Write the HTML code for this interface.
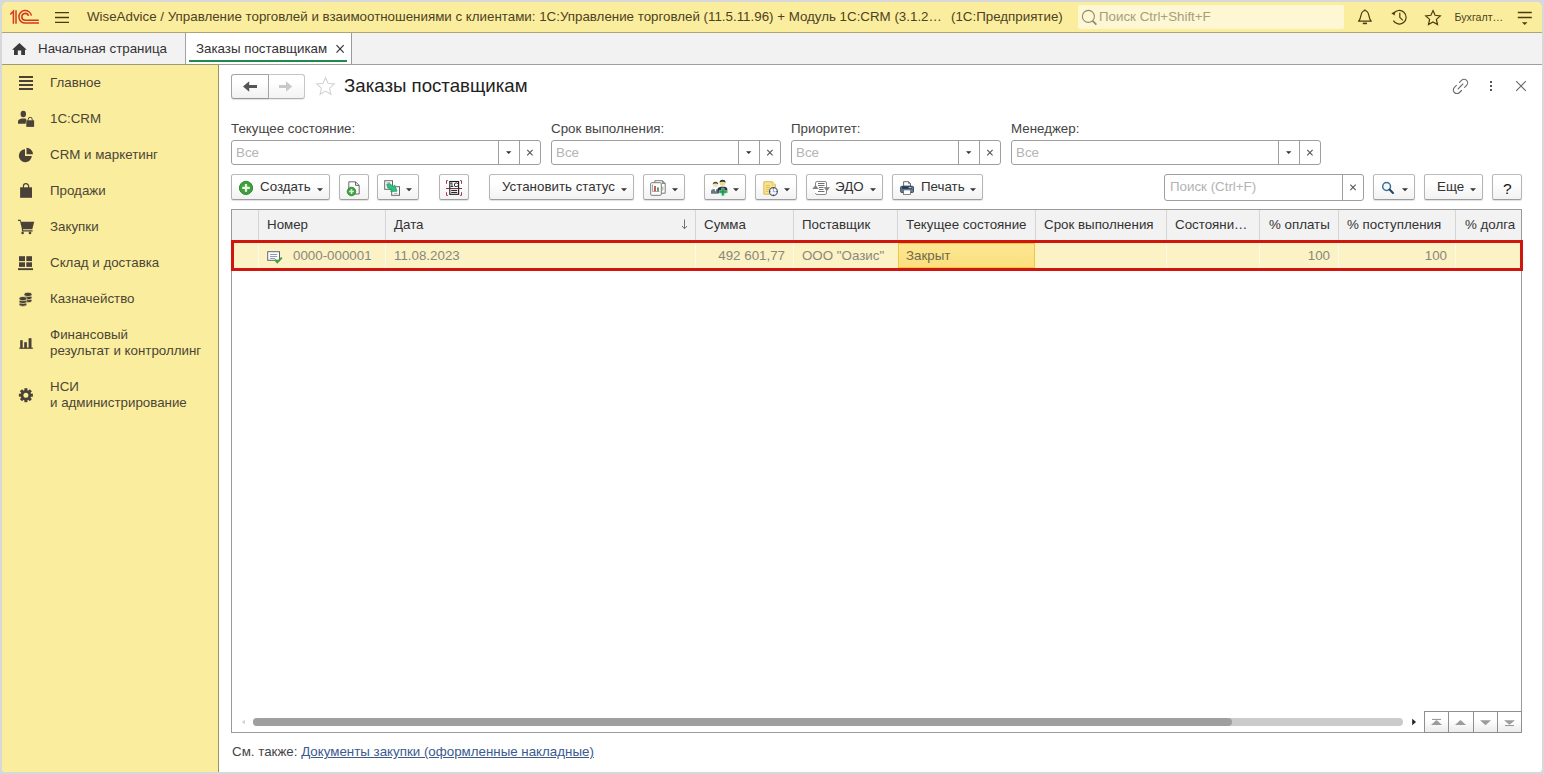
<!DOCTYPE html>
<html lang="ru">
<head>
<meta charset="utf-8">
<title>Заказы поставщикам</title>
<style>
*{box-sizing:border-box;margin:0;padding:0}
html,body{width:1544px;height:774px;overflow:hidden}
body{background:#d6d8d9;font-family:"Liberation Sans",Arial,sans-serif;font-size:13.33px;color:#333;position:relative}
.abs{position:absolute}
#win{position:absolute;left:2px;top:2px;width:1540px;height:770px;background:#fff;border-radius:6px 6px 4px 4px;overflow:hidden}
#top{position:absolute;left:0;top:0;width:1540px;height:31px;background:#fbed9e;border-bottom:1px solid #aea277}
#tabs{position:absolute;left:0;top:31px;width:1540px;height:32px;background:#f2f2f2;border-bottom:1px solid #a09fa0}
#side{position:absolute;left:0;top:62px;width:217px;height:708px;background:#fbed9e;border-right:1px solid #9b9167;border-top:1px solid #9c9b77}
#main{position:absolute;left:217px;top:63px;width:1323px;height:707px;background:#fff}
.t{position:absolute;white-space:nowrap;line-height:16px}
#title{left:85px;top:7px;font-size:13.33px;color:#4b4321;line-height:16px}
.tab{position:absolute;top:0;height:31px;font-size:13.33px;color:#333;line-height:16px}
.nav{position:absolute;left:48px;color:#4a4636;font-size:13.33px;line-height:16px;margin-top:.5px;white-space:nowrap}
.ico{position:absolute}
.lbl{position:absolute;top:56px;font-size:13.33px;color:#444;line-height:16px;white-space:nowrap}
.inp{position:absolute;top:75px;height:25px;border:1px solid #9f9f9f;border-radius:3px;background:#fff}
.inp .ph{position:absolute;left:4px;top:4px;color:#b3b3b3;font-size:13.33px;line-height:16px}
.inp .sep{position:absolute;top:0;width:1px;height:23px;background:#9f9f9f}
.btn{position:absolute;top:109px;height:26px;border:1px solid #b4b4b4;border-top-color:#bcbcbc;border-bottom-color:#9c9c9c;border-radius:2.500px;background:linear-gradient(#ffffff 30%,#f2f2f2);box-shadow:0 1px 1px rgba(0,0,0,.13);font-size:13.33px;color:#333;line-height:16px;white-space:nowrap}
.btn .tx{position:absolute;top:4px}
.dd{position:absolute;width:0;height:0;border-left:3px solid transparent;border-right:3px solid transparent;border-top:3px solid #333}
.x{position:absolute;color:#555;font-size:13.33px;line-height:16px}
#grid{position:absolute;left:12px;top:144px;width:1291px;height:524px;border:1px solid #9a9a9a;background:#fff}
#ghead{position:absolute;left:0;top:0;width:1289px;height:30px;background:#f2f2f2}
.hc{position:absolute;top:7px;font-size:13.33px;color:#333;line-height:16px;white-space:nowrap}
.hs{position:absolute;top:0;width:1px;height:30px;background:#d5d5d5}
#row{position:absolute;left:-1px;top:30px;width:1292px;height:31px;background:#fbf2c6;border:3px solid #cf150e}
.rs{position:absolute;top:0;width:1px;height:25px;background:rgba(255,255,255,.5)}
.rc{position:absolute;top:5px;font-size:13.33px;color:#8a8878;line-height:16px;white-space:nowrap}
</style>
</head>
<body>
<div id="win">
<div id="top">
  <div class="t" id="title">WiseAdvice / Управление торговлей и взаимоотношениями с клиентами: 1С:Управление торговлей (11.5.11.96) + Модуль 1С:CRM (3.1.2…</div>
  <div class="t" id="title2" style="left:949px;top:7px;font-size:13.33px;color:#4b4321">(1С:Предприятие)</div>
  <div class="abs" id="gsearch" style="left:1076px;top:3px;width:266px;height:24px;background:#fdf7d4;border-radius:2px"></div>
  <div class="t" style="left:1097px;top:7px;font-size:13.33px;color:#a59f7b">Поиск Ctrl+Shift+F</div>
  <div class="t" id="usr" style="left:1452.500px;top:7px;font-size:10.67px;color:#4b4321">Бухгалт…</div>
</div>
<div id="tabs">
  <div class="tab" style="left:0;width:184px;border-right:1px solid #a2a2a2"><span class="t" style="left:36px;top:8px">Начальная страница</span></div>
  <div class="tab" style="left:184px;width:166px;background:#fff;border-right:1px solid #9a9a9a"><span class="t" style="left:10px;top:8px">Заказы поставщикам</span>
    <div class="abs" style="left:3px;top:27px;width:158px;height:2px;background:#1f8a4c"></div></div>
</div>
<div id="side">
  <div class="nav" style="top:9px">Главное</div>
  <div class="nav" style="top:45px">1C:CRM</div>
  <div class="nav" style="top:81px">CRM и маркетинг</div>
  <div class="nav" style="top:117px">Продажи</div>
  <div class="nav" style="top:153px">Закупки</div>
  <div class="nav" style="top:189px">Склад и доставка</div>
  <div class="nav" style="top:225px">Казначейство</div>
  <div class="nav" style="top:261px">Финансовый<br>результат и контроллинг</div>
  <div class="nav" style="top:313px">НСИ<br>и администрирование</div>
</div>
<div id="main">
  <div class="abs" id="navbtn" style="left:12px;top:9px;width:38px;height:25px;border:1px solid #a4a4a4;border-bottom-color:#959595;border-radius:3px 0 0 3px;background:linear-gradient(#fff 30%,#f1f1f1);box-shadow:0 1px 1px rgba(0,0,0,.12)"></div><div class="abs" style="left:49px;top:9px;width:37px;height:25px;border:1px solid #c6c6c6;border-left-color:#a4a4a4;border-bottom-color:#b0b0b0;border-radius:0 3px 3px 0;background:linear-gradient(#fff 30%,#f3f3f3);box-shadow:0 1px 1px rgba(0,0,0,.08)"></div>
  <div class="t" id="h1" style="left:125px;top:10px;font-size:18.67px;line-height:22px;color:#222">Заказы поставщикам</div>

  <div class="lbl" style="left:12px">Текущее состояние:</div>
  <div class="lbl" style="left:332px">Срок выполнения:</div>
  <div class="lbl" style="left:572px">Приоритет:</div>
  <div class="lbl" style="left:792px">Менеджер:</div>

  <div class="inp" style="left:12px;width:310px"><span class="ph">Все</span><div class="sep" style="left:266px"></div><div class="sep" style="left:287px"></div></div>
  <div class="inp" style="left:332px;width:230px"><span class="ph">Все</span><div class="sep" style="left:186px"></div><div class="sep" style="left:207px"></div></div>
  <div class="inp" style="left:572px;width:210px"><span class="ph">Все</span><div class="sep" style="left:166px"></div><div class="sep" style="left:187px"></div></div>
  <div class="inp" style="left:792px;width:310px"><span class="ph">Все</span><div class="sep" style="left:266px"></div><div class="sep" style="left:287px"></div></div>

  <div class="btn" style="left:12px;width:99px"><span class="tx" style="left:28px">Создать</span></div>
  <div class="btn" style="left:120px;width:30px"></div>
  <div class="btn" style="left:158px;width:42px"></div>
  <div class="btn" style="left:220px;width:30px"></div>
  <div class="btn" style="left:270px;width:145px"><span class="tx" style="left:12px">Установить статус</span></div>
  <div class="btn" style="left:424px;width:42px"></div>
  <div class="btn" style="left:485px;width:42px"></div>
  <div class="btn" style="left:536px;width:42px"></div>
  <div class="btn" style="left:587px;width:77px"><span class="tx" style="left:28px">ЭДО</span></div>
  <div class="btn" style="left:673px;width:91px"><span class="tx" style="left:28px">Печать</span></div>
  <div class="inp" id="srch" style="left:945px;top:109px;width:200px;height:27px"><span class="ph" style="top:4px;left:5px">Поиск (Ctrl+F)</span><div class="sep" style="left:177px;height:25px"></div></div>
  <div class="btn" style="left:1154px;width:42px"></div>
  <div class="btn" style="left:1205px;width:59px"><span class="tx" style="left:12px">Еще</span></div>
  <div class="btn" style="left:1273px;width:30px"><span class="tx" id="q" style="left:10px;top:5.500px;font-size:15.500px;color:#111">?</span></div>

  <div id="grid">
    <div id="ghead">
      <div class="hs" style="left:26px"></div><div class="hc" style="left:35px">Номер</div>
      <div class="hs" style="left:153px"></div><div class="hc" style="left:162px">Дата</div>
      <div class="hs" style="left:463px"></div><div class="hc" style="left:472px">Сумма</div>
      <div class="hs" style="left:561px"></div><div class="hc" style="left:570px">Поставщик</div>
      <div class="hs" style="left:665px"></div><div class="hc" style="left:674px">Текущее состояние</div>
      <div class="hs" style="left:803px"></div><div class="hc" style="left:812px">Срок выполнения</div>
      <div class="hs" style="left:934px"></div><div class="hc" style="left:943px">Состояни…</div>
      <div class="hs" style="left:1027px"></div><div class="hc" style="left:1037px">% оплаты</div>
      <div class="hs" style="left:1106px"></div><div class="hc" style="left:1115px">% поступления</div>
      <div class="hs" style="left:1223px"></div><div class="hc" style="left:1233px">% долга</div>
    </div>
    <div id="row">
      <div class="rs" style="left:24px"></div><div class="rs" style="left:151px"></div><div class="rs" style="left:461px"></div><div class="rs" style="left:559px"></div><div class="rs" style="left:932px"></div><div class="rs" style="left:1025px"></div><div class="rs" style="left:1104px"></div><div class="rs" style="left:1221px"></div>
      <div class="rc" style="left:59px">0000-000001</div>
      <div class="rc" style="left:160px">11.08.2023</div>
      <div class="rc" style="right:735px">492 601,77</div>
      <div class="rc" style="left:568px">ООО "Оазис"</div>
      <div class="abs" id="cell" style="left:664px;top:0;width:137px;height:25px;background:linear-gradient(#fce791,#fbdf80);border:1px solid #f1c640"></div>
      <div class="rc" style="left:672px;color:#6e6a4e">Закрыт</div>
      <div class="rc" style="right:190px">100</div>
      <div class="rc" style="right:73px">100</div>
    </div>
  </div>
  <div class="abs" id="sbtn" style="left:1205px;top:646px;width:98px;height:22px;border:1px solid #8f8f8f;background:linear-gradient(#fff 40%,#ececec)"><div class="abs" style="left:23px;top:0;width:1px;height:20px;background:#8f8f8f"></div><div class="abs" style="left:48px;top:0;width:1px;height:20px;background:#8f8f8f"></div><div class="abs" style="left:72px;top:0;width:1px;height:20px;background:#8f8f8f"></div></div>
  <div class="t" style="left:13px;top:679px;font-size:13.33px;color:#444">См. также: <span style="color:#3b5a8e;text-decoration:underline">Документы закупки (оформленные накладные)</span></div>
</div>
</div>
<svg id="ico" width="1544" height="774" viewBox="0 0 1544 774" style="position:absolute;left:0;top:0;pointer-events:none;will-change:transform">
<!-- 1C logo -->
<g fill="none" stroke="#d4391d" stroke-width="1.5" stroke-linecap="butt">
  <path d="M10.3 14.4 L13.4 11.2 L13.4 23.8"/>
  <path d="M16 10.2 L16 23.8"/>
  <path d="M31.4 15.7 A6.3 6.3 0 1 0 25.2 23.1 L39 23.1"/>
  <path d="M28.5 15.9 A3.4 3.4 0 1 0 25.2 20.2 L38.8 20.2"/>
</g>
<!-- hamburger top -->
<g stroke="#4a3b0c" stroke-width="1.3">
  <path d="M55 12.6H69M55 17.5H69M55 22.4H69"/>
</g>
<!-- global search magnifier -->
<g fill="none" stroke="#8f8a70" stroke-width="1.1">
  <circle cx="1088.4" cy="16.4" r="6"/>
  <path d="M1092.6 20.8L1096.4 24.6" stroke-width="1.8"/>
</g>
<!-- bell -->
<g fill="none" stroke="#4a3b0c" stroke-width="1.2" stroke-linejoin="round">
  <path d="M1358.5 21.2 C1361.5 19 1360.2 13.5 1362.6 11.6 C1363.6 10.7 1364.2 10.6 1364.9 10.4 C1365.6 10.6 1366.2 10.7 1367.2 11.6 C1369.6 13.500 1368.300 19 1371.300 21.200 Z"/>
  <path d="M1364.9 10.400V9.4"/>
  <path d="M1362.8 23.4 H1367" stroke-width="1.6"/>
</g>
<!-- history -->
<g fill="none" stroke="#4a3b0c" stroke-width="1.2">
  <path d="M1393.6 13.6 A6.800 6.800 0 1 1 1393.400 20.600"/>
  <path d="M1399.800 12.800V17.300L1402.800 20.300"/>
  <path d="M1391.300 13.200 L1394.600 15.600 L1395.200 11.600Z" fill="#4a3b0c" stroke="none"/>
</g>
<!-- star top -->
<path d="M1433 10.600 L1435.100 15.300 L1440.300 15.900 L1436.400 19.400 L1437.500 24.500 L1433 21.900 L1428.500 24.500 L1429.600 19.400 L1425.700 15.900 L1430.900 15.300Z" fill="none" stroke="#4a3b0c" stroke-width="1.2" stroke-linejoin="miter"/>
<!-- menu lines right -->
<g stroke="#4a3b0c" stroke-width="1.3"><path d="M1517.800 12.500H1531.800M1517.800 17.500H1531.800"/></g>
<path d="M1521.900 22.300H1527.500L1524.700 25.100Z" fill="#4a3b0c"/>
<!-- home -->
<path d="M19.400 43 L26.800 49.700 L25 49.700 L25 55 L21.200 55 L21.200 50.500 L17.800 50.500 L17.800 55 L14 55 L14 49.700 L12.100 49.700Z" fill="#3a3a3c"/>
<!-- tab close -->
<path d="M336.500 45.200L343.700 52.600M343.700 45.200L336.500 52.600" stroke="#333" stroke-width="1.2" fill="none"/>
<!-- nav arrows -->
<path d="M243 86.500L249.200 81.200V85H257V88H249.200V91.800Z" fill="#555"/>
<path d="M292.200 86.500L286 81.200V85H279V88H286V91.800Z" fill="#c9c9c9"/>
<!-- favourite star -->
<path d="M325.500 77.500 L328 83.200 L334.300 83.900 L329.600 88.100 L330.900 94.300 L325.500 91.100 L320.100 94.300 L321.400 88.100 L316.700 83.900 L323 83.200Z" fill="none" stroke="#d3d3d3" stroke-width="1.100"/>
<!-- link icon -->
<g fill="none" stroke="#6a6a6a" stroke-width="1.1" stroke-linecap="round">
  <path d="M1459.500 82.300 L1461.500 80.300 A3.600 3.600 0 0 1 1466.600 85.400 L1464.600 87.400"/>
  <path d="M1461.500 90.500 L1459.500 92.500 A3.600 3.600 0 0 1 1454.400 87.400 L1456.400 85.400"/>
  <path d="M1458.100 88.800L1462.900 84"/>
</g>
<!-- kebab -->
<g fill="#555"><rect x="1490" y="81" width="2" height="2"/><rect x="1490" y="85" width="2" height="2"/><rect x="1490" y="89" width="2" height="2"/></g>
<!-- close form -->
<path d="M1516.200 81.200L1525.800 90.800M1525.800 81.200L1516.200 90.800" stroke="#6a6a6a" stroke-width="1.200" fill="none"/>
<!-- sidebar icons -->
<g fill="#4a4239">
  <!-- Главное -->
  <rect x="19" y="76" width="14" height="2"/><rect x="19" y="80" width="14" height="2"/><rect x="19" y="84" width="14" height="2"/><rect x="19" y="88" width="14" height="2"/>
  <!-- 1C:CRM person + bag -->
  <ellipse cx="23.3" cy="114" rx="2.7" ry="3.2"/>
  <path d="M18 123.800V121.500C18 119.800 20 119 21.500 118.600H25.100C25.600 118.800 26 119 26.300 119.300L25.600 123.800Z"/>
  <rect x="26.300" y="120.300" width="7.800" height="6.600"/>
  <path d="M28.200 120.800V119.300A2 2 0 0 1 32.200 119.300V120.800" fill="none" stroke="#4a4239" stroke-width="1"/>
  <!-- pie -->
  <path d="M25 149.200A6.500 6.500 0 1 0 31.800 156H25Z"/>
  <path d="M26.500 147.800A6.500 6.500 0 0 1 33 154.300H26.500Z"/>
  <!-- bag -->
  <path d="M20.100 187.300H32V197.800H20.100Z"/>
  <path d="M23.400 189.500V186.300A2.600 2.600 0 0 1 28.600 186.300V189.500" fill="none" stroke="#4a4239" stroke-width="1.200"/>
  <!-- cart -->
  <path d="M18 219.700H20.700L21 221.800H34.200L32.300 229.200H22L20 220.900H18Z"/>
  <path d="M21.700 228.500L22.200 231.400H32.600V230.200H23.200L22.900 228.500Z"/>
  <circle cx="22.600" cy="232.900" r="1.300"/><circle cx="30" cy="232.900" r="1.300"/>
  <!-- warehouse -->
  <rect x="19" y="256.200" width="6" height="4.900"/><rect x="26.300" y="256.200" width="5.700" height="4.900"/>
  <rect x="19" y="262.300" width="6" height="4.600"/><rect x="26.300" y="262.300" width="5.700" height="4.600"/>
  <rect x="18" y="268.200" width="15" height="1.900"/>
  <!-- bar chart -->
  <rect x="20.200" y="340.200" width="2.500" height="8"/><rect x="24.200" y="342.200" width="2.700" height="6"/><rect x="28.600" y="338.200" width="2.900" height="10"/>
  <rect x="19.300" y="347.600" width="13.600" height="1.200"/>
</g>
<!-- coins -->
<g fill="#4a4239" stroke="#fbed9e" stroke-width="0.700">
  <ellipse cx="28" cy="300.600" rx="4" ry="2.200"/><ellipse cx="28" cy="297.600" rx="4" ry="2.200"/><ellipse cx="28" cy="294.400" rx="4" ry="2.200"/>
  <ellipse cx="22.900" cy="304.200" rx="3.900" ry="2.200"/><ellipse cx="22.900" cy="301.400" rx="3.900" ry="2.200"/><ellipse cx="22.900" cy="298.600" rx="3.900" ry="2.200"/>
</g>
<!-- gear -->
<g transform="translate(25.900 395.200)">
  <circle r="3.900" fill="none" stroke="#4a4239" stroke-width="2.800"/>
  <g fill="#4a4239">
    <rect x="-1.500" y="-7" width="3" height="3"/><rect x="-1.500" y="4" width="3" height="3"/>
    <rect x="-7" y="-1.500" width="3" height="3"/><rect x="4" y="-1.500" width="3" height="3"/>
    <g transform="rotate(45)"><rect x="-1.500" y="-7" width="3" height="3"/><rect x="-1.500" y="4" width="3" height="3"/><rect x="-7" y="-1.500" width="3" height="3"/><rect x="4" y="-1.500" width="3" height="3"/></g>
  </g>
</g>
<!-- input arrows -->
<path d="M506.0 151.2H511.4L508.7 154.0Z" fill="#333"/>
<path d="M527.2 149.9L532.6 155.3M532.6 149.9L527.2 155.3" stroke="#555" stroke-width="1.1" fill="none"/>
<path d="M746.0 151.2H751.4L748.7 154.0Z" fill="#333"/>
<path d="M767.2 149.9L772.6 155.3M772.6 149.9L767.2 155.3" stroke="#555" stroke-width="1.1" fill="none"/>
<path d="M966.0 151.2H971.4L968.7 154.0Z" fill="#333"/>
<path d="M987.2 149.9L992.6 155.3M992.6 149.9L987.2 155.3" stroke="#555" stroke-width="1.1" fill="none"/>
<path d="M1286.0 151.2H1291.4L1288.7 154.0Z" fill="#333"/>
<path d="M1307.2 149.9L1312.6 155.3M1312.6 149.9L1307.2 155.3" stroke="#555" stroke-width="1.1" fill="none"/>
<path d="M1350.3 184.7L1355.7 190.1M1355.7 184.7L1350.3 190.1" stroke="#555" stroke-width="1.1" fill="none"/>
<!-- button arrows -->
<path d="M317.0 188.2H323.0L320.0 191.2Z" fill="#333"/>
<path d="M406.0 188.2H412.0L409.0 191.2Z" fill="#333"/>
<path d="M621.0 188.2H627.0L624.0 191.2Z" fill="#333"/>
<path d="M672.0 188.2H678.0L675.0 191.2Z" fill="#333"/>
<path d="M733.0 188.2H739.0L736.0 191.2Z" fill="#333"/>
<path d="M784.0 188.2H790.0L787.0 191.2Z" fill="#333"/>
<path d="M870.0 188.2H876.0L873.0 191.2Z" fill="#333"/>
<path d="M970.0 188.2H976.0L973.0 191.2Z" fill="#333"/>
<path d="M1402.0 188.2H1408.0L1405.0 191.2Z" fill="#333"/>
<path d="M1470.0 188.2H1476.0L1473.0 191.2Z" fill="#333"/>
<!-- Создать green plus -->
<circle cx="246" cy="187.900" r="6.600" fill="#3f9f40" stroke="#2f8a34" stroke-width="1"/>
<path d="M242.200 187.900H249.800M246 184.100V191.700" stroke="#e8f8e0" stroke-width="2.200" fill="none"/>
<!-- btn2 doc+plus -->
<path d="M348.800 181.800H355.500L359.200 185.400V194H348.800Z" fill="#fff" stroke="#6a6a6a" stroke-width="1"/>
<path d="M355.500 181.800V185.400H359.200" fill="none" stroke="#6a6a6a" stroke-width="1"/>
<circle cx="351.500" cy="191.500" r="4.300" fill="#3f9f40" stroke="#2d8a32" stroke-width=".8"/>
<path d="M349.100 191.500H353.900M351.500 189.100V193.900" stroke="#d8f5cf" stroke-width="1.600" fill="none"/>
<!-- btn3 two docs + green arrow -->
<rect x="384.700" y="180.700" width="7.800" height="8.600" fill="#fff" stroke="#666" stroke-width="1"/>
<path d="M386.500 182.800H390.500" stroke="#999" stroke-width=".8"/>
<rect x="391.700" y="186.700" width="7.800" height="8.600" fill="#fff" stroke="#666" stroke-width="1"/>
<path d="M394 193.400H397.500" stroke="#999" stroke-width=".8"/>
<path d="M386.800 184.200L389.600 183.600L393.300 186.500L394.700 184.900L397 191.200L390.600 191.400L391.700 189.500L387.600 187.700Z" fill="#2fc184" stroke="#1f9a62" stroke-width=".8" stroke-linejoin="round"/>
<!-- btn4 1C barcode -->
<rect x="449.800" y="181.500" width="8.800" height="12.800" fill="#fff" stroke="#1a1a1a" stroke-width="1.100"/>
<text x="454.200" y="187.300" font-family="Liberation Sans,Arial,sans-serif" font-weight="bold" font-size="6.400" text-anchor="middle" fill="#111" opacity=".99" text-rendering="geometricPrecision">1C</text>
<path d="M451.200 190.400H457.200M451.200 192.400H457.200" stroke="#111" stroke-width="1"/>
<path d="M446 188.500H462" stroke="#5e1f35" stroke-width=".9"/>
<g fill="none" stroke="#a8325c" stroke-width="1"><path d="M447.900 180.600H446.500V183.800"/><path d="M460.100 180.600H461.500V183.800"/><path d="M447.900 195.400H446.500V192.200"/><path d="M460.100 195.400H461.500V192.200"/></g>
<!-- btn6 docs with chart -->
<path d="M654.800 180.700H662.500L665.200 183.400V193.200H654.800Z" fill="#fff" stroke="#7a7a7a" stroke-width="1"/>
<path d="M662.300 180.700V183.500H665.200" fill="#999" stroke="#7a7a7a" stroke-width=".8"/>
<rect x="650.700" y="182.700" width="10.600" height="12.600" rx="1" fill="#fff" stroke="#7a7a7a" stroke-width="1"/>
<path d="M652.500 184.500V191.500H659.500" fill="none" stroke="#888" stroke-width=".7"/>
<rect x="654.200" y="186" width="1.600" height="5.200" fill="#c0392b"/><rect x="657.200" y="187.400" width="1.500" height="3.800" fill="#3b7a3b"/>
<path d="M662.800 186.500V190.500" stroke="#888" stroke-width=".8"/>
<!-- btn7 people + plus -->
<path d="M711 193.800V191.200C711 189.800 712.500 189.200 714 189H717C718 189.200 718.500 189.600 718.500 190.500V193.800Z" fill="#6d7484"/>
<path d="M714.500 189L715.500 192L716.500 189Z" fill="#fff"/>
<circle cx="715.500" cy="184.600" r="2.600" fill="#f3e2c2"/>
<path d="M712.800 184.400A2.700 2.700 0 0 1 718.200 184.400C717.500 183.400 713.800 183.200 712.800 184.400Z" fill="#4a4620"/>
<path d="M717.600 193V189C717.600 187.600 719.500 186.900 721 186.700H724.500C726 186.900 727.300 187.700 727.300 189V193Z" fill="#2b3340"/>
<circle cx="722.600" cy="183" r="2.900" fill="#e9dc98"/>
<path d="M719.600 182.800A3 3 0 0 1 725.600 182.800C724.800 181.600 720.600 181.400 719.600 182.800Z" fill="#2e2e2a"/>
<path d="M721.600 188.200H724.200V190.600H726.600V193.200H724.200V195.800H721.600V193.200H719.200V190.600H721.600Z" fill="#1f9b50" stroke="#bdf0d0" stroke-width=".5"/>
<!-- btn8 yellow doc + clock -->
<path d="M763.800 181.800H772.500L775.400 184.700V194.200H763.800Z" fill="#f8e391" stroke="#dcbc50" stroke-width="1"/>
<path d="M772.300 181.800V184.900H775.400" fill="#fdf3c0" stroke="#dcbc50" stroke-width=".8"/>
<path d="M765.800 185.500H770M765.800 187.500H770M765.800 189.500H769M765.800 191.500H768" stroke="#e0c25c" stroke-width="1"/>
<circle cx="773.400" cy="191.600" r="4" fill="#f4f6ff" stroke="#585e70" stroke-width="1.200"/>
<path d="M773.400 189.200V191.600H775.400" fill="none" stroke="#8a9ad8" stroke-width=".9"/>
<path d="M773.400 187.600V188.600M773.400 194.600V195.600M769.400 191.600H770.400M776.400 191.600H777.400" stroke="#333" stroke-width="1"/>
<!-- EDO icon -->
<rect x="815.500" y="181.500" width="11" height="13" rx="1.500" fill="#fff" stroke="#8a8a8a" stroke-width="1"/>
<path d="M818 183.500H824.500M818 185.500H824.500M819 187.500H823.500M819 189.500H823.500M818 191.500H824.500" stroke="#6f6f6f" stroke-width="1"/>
<path d="M812.300 189L815.500 185L818.700 189Z" fill="#808080"/><path d="M814.700 189H816.300V193H814.700Z" fill="#fff"/>
<path d="M823.600 187.200L826.800 191.200L830 187.200Z" fill="#808080"/>
<!-- printer -->
<path d="M903.600 186.200V181.700H908.600L910.500 183.600V186.200Z" fill="#fff" stroke="#5a5a5a" stroke-width=".9"/>
<path d="M908.500 181.700V183.700H910.500" fill="none" stroke="#5a5a5a" stroke-width=".7"/>
<rect x="900.600" y="186.300" width="12.900" height="6.200" rx="1" fill="#5d7c93" stroke="#2c4258" stroke-width=".9"/>
<rect x="902" y="186.600" width="10" height="2.200" fill="#1f3a57"/>
<rect x="908.500" y="187.200" width="3" height=".9" fill="#cfe3f5"/>
<rect x="903.600" y="189.900" width="6.900" height="4.500" fill="#fff" stroke="#6a6a6a" stroke-width=".8"/>
<!-- search magnifier blue -->
<circle cx="1386.600" cy="186.500" r="3.900" fill="#f2f8fc" stroke="#3f6d92" stroke-width="1.500"/>
<path d="M1389.600 189.500L1393 193" stroke="#21486c" stroke-width="2.100" stroke-linecap="round"/>
<!-- row doc icon -->
<rect x="267.700" y="251.700" width="11.800" height="8.600" fill="#fff" stroke="#666" stroke-width="1"/>
<path d="M270 254.500H277.200M270 256.500H277.200M270 258.500H275" stroke="#8f9bbd" stroke-width="1"/>
<path d="M275 259.600L277.300 262.200L281.800 257.600" fill="none" stroke="#3fa03f" stroke-width="2"/>
<!-- sort arrow -->
<path d="M684.500 219.500V228.500M682 226L684.500 228.800L687 226" fill="none" stroke="#707070" stroke-width="1"/>
<!-- h scrollbar -->
<path d="M244.800 719.800V724.200L242 722Z" fill="#cfcfcf"/>
<rect x="253" y="718" width="1150" height="8" rx="4" fill="#cbcbcb"/>
<rect x="253" y="718" width="979" height="8" rx="4" fill="#9f9f9f"/>
<path d="M1412.200 718.800V725.200L1416 722Z" fill="#222"/>
<!-- scroll buttons -->
<g fill="#9b9b9b">
<rect x="1432" y="718.900" width="9" height="1.100"/><path d="M1436.500 720L1442 725H1431Z"/>
<path d="M1460.500 720L1466 725H1455Z"/>
<path d="M1480 720.200H1491L1485.500 725.200Z"/>
<path d="M1504 720.200H1515L1509.500 724.800Z"/><rect x="1505" y="725" width="9" height="1.100"/>
</g>
</svg>

</body>
</html>
